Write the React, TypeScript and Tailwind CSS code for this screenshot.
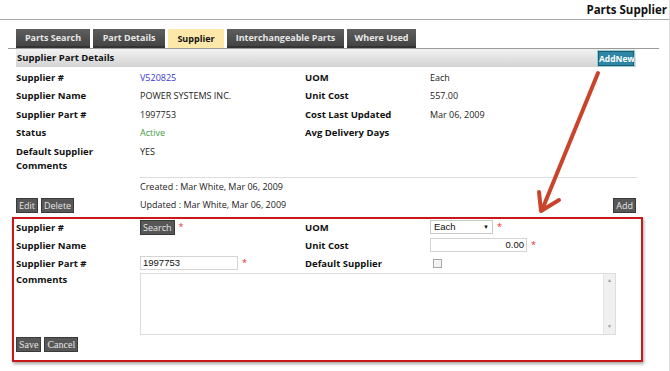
import React from "react";

const tabs = [
  { label: "Parts Search", w: "w-[74px]" },
  { label: "Part Details", w: "w-[72px]" },
  { label: "Supplier", w: "w-[56px]", active: true },
  { label: "Interchangeable Parts", w: "w-[117px]" },
  { label: "Where Used", w: "w-[69px]" },
];

const Label = ({ children }: { children: React.ReactNode }) => (
  <div className="font-bold text-[9.5px] text-[#111] leading-[13px]">{children}</div>
);

const Val = ({
  children,
  color = "text-[#222]",
  className = "",
}: {
  children: React.ReactNode;
  color?: string;
  className?: string;
}) => <div className={"text-[9px] " + color + " " + className}>{children}</div>;

const Btn = ({ children, serif = false }: { children: React.ReactNode; serif?: boolean }) => (
  <button
    className={
      "h-[15px] px-[2px] bg-[#575757] border border-[#3a3a3a] text-[#e6e6e6] leading-[13px] " +
      (serif ? "font-['Liberation_Serif',serif] text-[10px]" : "text-[9px]")
    }
  >
    {children}
  </button>
);

const Req = () => <span className="text-[#e03030] text-[9px] ml-[4px]">*</span>;

export default function App() {
  return (
    <div className="relative w-[670px] h-[371px] overflow-hidden bg-white border-r border-[#ddd] font-['Open_Sans',sans-serif]">
      {/* page title */}
      <div className="h-[20px] border-b border-[#a8a8a8] flex justify-end items-center pr-[2px]">
        <span className="font-bold text-[11.5px] text-[#111]">Parts Supplier</span>
      </div>

      {/* tabs */}
      <div className="mt-[9px] ml-[8px] mr-[10px] pl-[8px] flex gap-[3px] border-b border-[#9a9a9a]">
        {tabs.map((t) => (
          <div
            key={t.label}
            className={
              t.w +
              " h-[19px] flex items-center justify-center font-bold text-[9px] " +
              (t.active
                ? "bg-[#fde7a9] text-[#111]"
                : "bg-gradient-to-b from-[#5e5e5e] to-[#444] text-[#e8e8e8] border-b-2 border-[#333]")
            }
          >
            {t.label}
          </div>
        ))}
      </div>

      {/* section header */}
      <div className="ml-[16px] w-[620px] h-[18px] bg-gradient-to-b from-[#f2f2f2] to-[#d3d3d3] flex items-center justify-between pl-[1px] pr-[2px]">
        <span className="font-bold text-[9.5px] text-[#111]">Supplier Part Details</span>
        <button className="h-[15px] w-[36px] bg-[#2d86a6] border border-[#1c5c74] text-white font-bold text-[8.5px] leading-[13px] outline outline-1 outline-[#9cc]">
          AddNew
        </button>
      </div>

      {/* details */}
      <div className="ml-[16px] mt-[1px] grid grid-cols-[124px_165px_125px_1fr] auto-rows-[18.5px] items-center">
        <Label>Supplier #</Label>
        <Val color="text-[#3a3ad6]">V520825</Val>
        <Label>UOM</Label>
        <Val>Each</Val>

        <Label>Supplier Name</Label>
        <Val className="text-[8.5px]">POWER SYSTEMS INC.</Val>
        <Label>Unit Cost</Label>
        <Val>557.00</Val>

        <Label>Supplier Part #</Label>
        <Val>1997753</Val>
        <Label>Cost Last Updated</Label>
        <Val>Mar 06, 2009</Val>

        <Label>Status</Label>
        <Val color="text-[#3f9b3f]">Active</Val>
        <Label>Avg Delivery Days</Label>
        <div />

        <div className="self-start pt-[2.5px]">
          <Label>
            Default Supplier
            <br />
            <span className="leading-[15px]">Comments</span>
          </Label>
        </div>
        <Val className="self-start pt-[2.5px]">YES</Val>
        <div />
        <div />
      </div>

      <div className="ml-[140px] mt-[16px] w-[497px] border-t border-[#ddd]" />

      <div className="ml-[16px] w-[620px] mt-[1px]">
        <div className="h-[16px] flex items-center pl-[124px]">
          <Val>Created : Mar White, Mar 06, 2009</Val>
        </div>
        <div className="h-[21px] flex items-center">
          <div className="w-[124px] flex gap-[3px]">
            <Btn>Edit</Btn>
            <Btn>Delete</Btn>
          </div>
          <Val className="flex-1">Updated : Mar White, Mar 06, 2009</Val>
          <Btn>Add</Btn>
        </div>
      </div>

      {/* edit form */}
      <div className="ml-[12px] mt-[1px] w-[631px] h-[145px] border-2 border-[#c81818] shadow-[1px_2px_3px_rgba(0,0,0,0.35)] pl-[2px]">
        <div className="grid grid-cols-[124px_165px_125px_1fr] items-center">
          <div className="h-[17px] flex items-center">
            <Label>Supplier #</Label>
          </div>
          <div className="flex items-center">
            <Btn>Search</Btn>
            <Req />
          </div>
          <Label>UOM</Label>
          <div className="flex items-center">
            <div className="w-[63px] h-[14px] border border-[#c8c8c8] flex items-center justify-between px-[3px] font-['Liberation_Sans',sans-serif] text-[9.5px] text-[#111]">
              <span>Each</span>
              <span className="text-[6px]">▼</span>
            </div>
            <Req />
          </div>

          <div className="h-[19px] flex items-center">
            <Label>Supplier Name</Label>
          </div>
          <div />
          <Label>Unit Cost</Label>
          <div className="flex items-center">
            <div className="w-[97px] h-[14px] border border-[#d4d4d4] flex items-center justify-end pr-[2px] font-['Liberation_Sans',sans-serif] text-[9.5px] text-[#111]">
              0.00
            </div>
            <Req />
          </div>

          <div className="h-[17px] flex items-center">
            <Label>Supplier Part #</Label>
          </div>
          <div className="flex items-center">
            <div className="w-[98px] h-[14px] border border-[#d4d4d4] flex items-center pl-[2px] font-['Liberation_Sans',sans-serif] text-[9.5px] text-[#111]">
              1997753
            </div>
            <Req />
          </div>
          <Label>Default Supplier</Label>
          <div className="flex items-center pl-[3px]">
            <div className="w-[9px] h-[9px] border border-[#a8a8a8] bg-[#f3f3f3]" />
          </div>
        </div>

        <div className="flex mt-[1px]">
          <div className="w-[124px]">
            <Label>Comments</Label>
          </div>
          <div className="w-[476px] h-[62px] border border-[#ddd] flex justify-end">
            <div className="w-[12px] h-full bg-[#f0f0f0] border-l border-[#e4e4e4] flex flex-col justify-between items-center py-[3px] text-[5px] text-[#999]">
              <span>▲</span>
              <span>▼</span>
            </div>
          </div>
        </div>

        <div className="flex gap-[3px] mt-[2px]">
          <Btn serif>Save</Btn>
          <Btn serif>Cancel</Btn>
        </div>
      </div>

      {/* annotation arrow */}
      <svg className="absolute left-0 top-0 pointer-events-none" width="670" height="371">
        <g stroke="#c8452c" strokeWidth="4" fill="none" strokeLinecap="round" strokeLinejoin="round">
          <line x1="598" y1="73" x2="542" y2="210" />
          <polyline points="539,192 541,211 559,200" />
        </g>
      </svg>
    </div>
  );
}
